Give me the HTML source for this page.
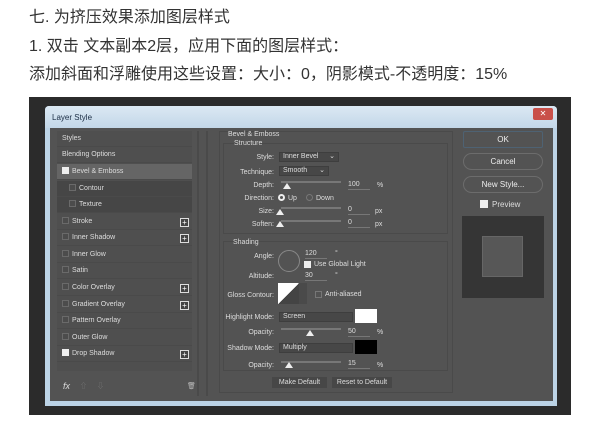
<!DOCTYPE html>
<html><head><meta charset="utf-8"><style>
*{margin:0;padding:0;box-sizing:border-box}
body{width:600px;height:432px;background:#fff;position:relative;overflow:hidden;font-family:"Liberation Sans","Noto Sans CJK SC",sans-serif}
.h{position:absolute;left:29px;font-size:16px;color:#333;line-height:18px;white-space:nowrap}
.a{position:absolute}
.t{position:absolute;font-size:7px;color:#ddd;white-space:nowrap;line-height:9px}
.r{text-align:right}
.row{position:absolute;left:57px;width:135px;height:16px;border-bottom:1px solid #4a4a4a;font-size:7px;color:#ddd;line-height:16px;padding-left:5px}
.cb{display:inline-block;width:7px;height:7px;border:1px solid #6a6a6a;background:#4c4c4c;vertical-align:-1px;margin-right:3px}
.ck{background:#eee;border-color:#eee}
.plus{position:absolute;right:3px;top:4px;width:9px;height:9px;border:1px solid #ddd;background:#444;color:#fff;font-size:8px;line-height:7px;text-align:center}
.dd{position:absolute;height:10px;background:#474747;border:1px solid #3e3e3e;font-size:7px;color:#ddd;line-height:8px;padding-left:3px}
.sl{position:absolute;height:2px;background:#777}
.th{position:absolute;width:0;height:0;border-left:4px solid transparent;border-right:4px solid transparent;border-bottom:6px solid #eee}
.in{position:absolute;height:10px;border-bottom:1px solid #777;font-size:7px;color:#ddd;line-height:9px}
.btn{position:absolute;left:463px;width:80px;height:17px;border:1px solid #6c6c6c;border-radius:9px;color:#eee;font-size:8px;line-height:15px;text-align:center}
</style></head><body>
<div class="h" style="top:9px">七. 为挤压效果添加图层样式</div>
<div class="h" style="top:38px">1. 双击 文本副本2层，应用下面的图层样式：</div>
<div class="h" style="top:66px">添加斜面和浮雕使用这些设置：大小：0，阴影模式-不透明度：15%</div>

<div class="a" style="left:29px;top:97px;width:542px;height:318px;background:#2b2b2b"></div>
<div class="a" style="left:45px;top:106px;width:512px;height:300px;background:#bcd3e6;border-radius:4px 4px 0 0"></div>
<div class="a" style="left:45px;top:106px;width:512px;height:22px;background:linear-gradient(#dbe8f3,#c3d7e8);border-radius:4px 4px 0 0"></div>
<div class="t" style="left:52px;top:113px;color:#1b2d44;font-size:8px">Layer Style</div>
<div class="a" style="left:533px;top:108px;width:20px;height:12px;background:#c9504a;border-radius:2px;color:#fff;font-size:8px;text-align:center;line-height:12px">✕</div>
<div class="a" style="left:50px;top:128px;width:503px;height:273px;background:#535353"></div>

<div class="a" style="left:57px;top:131px;width:135px;height:240px;background:#4f4f4f"></div>
<div class="row" style="top:131px">Styles</div>
<div class="row" style="top:147px">Blending Options</div>
<div class="row" style="top:164px;background:#656565"><span class="cb ck"></span>Bevel &amp; Emboss</div>
<div class="row" style="top:181px;padding-left:12px;background:#464646"><span class="cb"></span>Contour</div>
<div class="row" style="top:197px;padding-left:12px;background:#464646"><span class="cb"></span>Texture</div>
<div class="row" style="top:214px"><span class="cb"></span>Stroke<span class="plus">+</span></div>
<div class="row" style="top:230px"><span class="cb"></span>Inner Shadow<span class="plus">+</span></div>
<div class="row" style="top:247px"><span class="cb"></span>Inner Glow</div>
<div class="row" style="top:263px"><span class="cb"></span>Satin</div>
<div class="row" style="top:280px"><span class="cb"></span>Color Overlay<span class="plus">+</span></div>
<div class="row" style="top:297px"><span class="cb"></span>Gradient Overlay<span class="plus">+</span></div>
<div class="row" style="top:313px"><span class="cb"></span>Pattern Overlay</div>
<div class="row" style="top:330px"><span class="cb"></span>Outer Glow</div>
<div class="row" style="top:346px"><span class="cb ck"></span>Drop Shadow<span class="plus">+</span></div>
<div class="t" style="left:63px;top:382px;font-size:9px;font-style:italic">fx</div>
<div class="t" style="left:80px;top:382px;color:#777">⇧</div>
<div class="t" style="left:97px;top:382px;color:#777">⇩</div>
<div class="t" style="left:187px;top:382px;color:#bbb">🗑</div>
<div class="a" style="left:197px;top:131px;width:2px;height:265px;background:#4a4a4a"></div>
<div class="a" style="left:206px;top:131px;width:2px;height:265px;background:#4a4a4a"></div>

<div class="a" style="left:219px;top:131px;width:234px;height:262px;border:1px solid #4a4a4a"></div>
<div class="t" style="left:228px;top:130px">Bevel &amp; Emboss</div>
<div class="a" style="left:223px;top:143px;width:225px;height:91px;border:1px solid #4a4a4a"></div>
<div class="t" style="left:234px;top:139px">Structure</div>
<div class="t r" style="left:220px;top:153px;width:54px">Style:</div>
<div class="dd" style="left:279px;top:152px;width:60px">Inner Bevel <span style="float:right;margin-right:3px">⌄</span></div>
<div class="t r" style="left:220px;top:168px;width:54px">Technique:</div>
<div class="dd" style="left:279px;top:166px;width:50px">Smooth <span style="float:right;margin-right:3px">⌄</span></div>
<div class="t r" style="left:220px;top:181px;width:54px">Depth:</div>
<div class="sl" style="left:281px;top:181px;width:60px"></div><div class="th" style="left:283px;top:183px"></div>
<div class="in" style="left:348px;top:180px;width:22px">100</div><div class="t" style="left:377px;top:181px">%</div>
<div class="t r" style="left:220px;top:194px;width:54px">Direction:</div>
<div class="a" style="left:278px;top:194px;width:7px;height:7px;border:2px solid #eee;border-radius:50%"></div>
<div class="t" style="left:288px;top:194px">Up</div>
<div class="a" style="left:306px;top:194px;width:7px;height:7px;border:1px solid #777;border-radius:50%"></div>
<div class="t" style="left:316px;top:194px">Down</div>
<div class="t r" style="left:220px;top:207px;width:54px">Size:</div>
<div class="sl" style="left:281px;top:207px;width:60px"></div><div class="th" style="left:276px;top:209px"></div>
<div class="in" style="left:348px;top:205px;width:22px">0</div><div class="t" style="left:375px;top:207px">px</div>
<div class="t r" style="left:220px;top:220px;width:54px">Soften:</div>
<div class="sl" style="left:281px;top:220px;width:60px"></div><div class="th" style="left:276px;top:221px"></div>
<div class="in" style="left:348px;top:218px;width:22px">0</div><div class="t" style="left:375px;top:220px">px</div>

<div class="a" style="left:223px;top:241px;width:225px;height:130px;border:1px solid #4a4a4a"></div>
<div class="t" style="left:233px;top:238px">Shading</div>
<div class="t r" style="left:220px;top:252px;width:54px">Angle:</div>
<div class="a" style="left:278px;top:250px;width:22px;height:22px;border:1px solid #888;border-radius:50%"></div>
<div class="in" style="left:305px;top:249px;width:22px">120</div><div class="t" style="left:335px;top:249px">°</div>
<div class="a" style="left:304px;top:261px;width:7px;height:7px;background:#eee"></div>
<div class="t" style="left:314px;top:260px">Use Global Light</div>
<div class="t r" style="left:220px;top:272px;width:54px">Altitude:</div>
<div class="in" style="left:305px;top:271px;width:22px">30</div><div class="t" style="left:335px;top:271px">°</div>
<div class="t r" style="left:220px;top:291px;width:54px">Gloss Contour:</div>
<div class="a" style="left:278px;top:283px;width:21px;height:21px;background:linear-gradient(to bottom right,#fff 50%,#444 50%)"></div>
<div class="a" style="left:299px;top:283px;width:8px;height:21px;background:#4a4a4a"></div>
<div class="a" style="left:315px;top:291px;width:7px;height:7px;border:1px solid #777"></div>
<div class="t" style="left:325px;top:290px">Anti-aliased</div>
<div class="t r" style="left:220px;top:313px;width:54px">Highlight Mode:</div>
<div class="dd" style="left:279px;top:312px;width:74px">Screen</div>
<div class="a" style="left:355px;top:309px;width:22px;height:14px;background:#fff"></div>
<div class="t r" style="left:220px;top:328px;width:54px">Opacity:</div>
<div class="sl" style="left:281px;top:328px;width:60px"></div><div class="th" style="left:306px;top:330px"></div>
<div class="in" style="left:348px;top:327px;width:22px">50</div><div class="t" style="left:377px;top:328px">%</div>
<div class="t r" style="left:220px;top:344px;width:54px">Shadow Mode:</div>
<div class="dd" style="left:279px;top:343px;width:74px">Multiply</div>
<div class="a" style="left:355px;top:340px;width:22px;height:14px;background:#000"></div>
<div class="t r" style="left:220px;top:361px;width:54px">Opacity:</div>
<div class="sl" style="left:281px;top:361px;width:60px"></div><div class="th" style="left:285px;top:362px"></div>
<div class="in" style="left:348px;top:359px;width:22px">15</div><div class="t" style="left:377px;top:361px">%</div>

<div class="a" style="left:272px;top:377px;width:55px;height:11px;background:#474747;color:#ddd;font-size:7px;text-align:center;line-height:11px">Make Default</div>
<div class="a" style="left:332px;top:377px;width:60px;height:11px;background:#474747;color:#ddd;font-size:7px;text-align:center;line-height:11px">Reset to Default</div>

<div class="btn" style="top:131px;border-color:#4e6273;border-radius:2px">OK</div>
<div class="btn" style="top:153px">Cancel</div>
<div class="btn" style="top:176px">New Style...</div>
<div class="a" style="left:480px;top:200px;width:8px;height:8px;background:#eee"></div>
<div class="t" style="left:492px;top:200px;font-size:8px">Preview</div>
<div class="a" style="left:462px;top:216px;width:82px;height:82px;background:#353535"></div>
<div class="a" style="left:482px;top:236px;width:41px;height:41px;background:#575757;border:1px solid #666"></div>
</body></html>
